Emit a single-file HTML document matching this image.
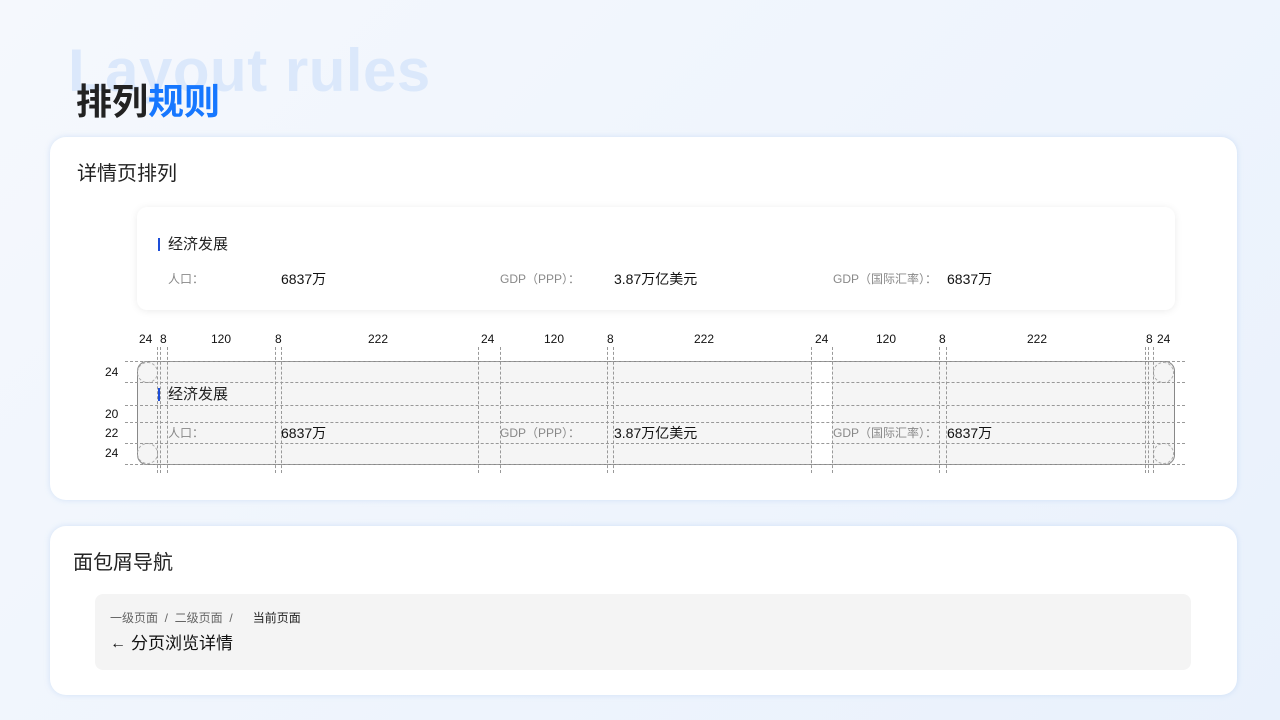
<!DOCTYPE html>
<html><head><meta charset="utf-8"><style>
*{margin:0;padding:0;box-sizing:border-box}
body{width:1280px;height:720px;overflow:hidden;position:relative;background:linear-gradient(135deg,#f5f8fd 0%,#eef4fd 60%,#e9f1fc 100%);font-family:"Liberation Sans","Noto Sans CJK SC",sans-serif;color:#222}
.a{position:absolute;white-space:nowrap}
.card{position:absolute;background:#fff;border-radius:16px;box-shadow:0 0 6px rgba(150,185,235,.35)}
.vl{position:absolute;top:347px;height:126px;width:0;border-left:1px dashed #999}
.hl{position:absolute;left:125px;width:1060px;height:0;border-top:1px dashed #999}
.n{position:absolute;font-size:12px;color:#111;top:332px}
.ln{position:absolute;font-size:12px;color:#111;left:105px}
.lab{font-size:12px;color:#888}
.val{font-size:14px;color:#111}
</style></head><body>
<div class="a" style="left:68px;top:36px;font-size:60px;font-weight:bold;color:#dbe8fb;line-height:70px;letter-spacing:0.5px">Layout rules</div>
<div class="a" style="left:76px;top:80px;font-size:36px;font-weight:bold;line-height:44px;color:#222">排列<span style="color:#1677ff">规则</span></div>

<div class="card" style="left:50px;top:137px;width:1187px;height:363px"></div>
<div class="a" style="left:77px;top:161px;font-size:20px;line-height:26px">详情页排列</div>
<div style="position:absolute;left:137px;top:207px;width:1038px;height:103px;background:#fff;border-radius:10px;box-shadow:0 1px 8px rgba(0,0,0,.08)"></div>
<div style="position:absolute;left:158px;top:238px;width:2px;height:13px;background:#1d4ed8"></div>
<div class="a" style="left:168px;top:235px;font-size:15px;line-height:20px">经济发展</div>
<div class="a lab" style="left:168px;top:271px;line-height:16px">人口：</div>
<div class="a val" style="left:281px;top:270px;line-height:18px">6837万</div>
<div class="a lab" style="left:500px;top:271px;line-height:16px">GDP（PPP）：</div>
<div class="a val" style="left:614px;top:270px;line-height:18px">3.87万亿美元</div>
<div class="a lab" style="left:833px;top:271px;line-height:16px">GDP（国际汇率）：</div>
<div class="a val" style="left:947px;top:270px;line-height:18px">6837万</div>

<div style="position:absolute;left:137px;top:361px;width:1038px;height:104px;background:#f5f5f5;border:1px solid #888;border-radius:10px"></div>
<div style="position:absolute;left:812px;top:362px;width:20px;height:102px;background:#fff"></div>
<div style="position:absolute;left:137px;top:362px;width:21px;height:21px;border:1px dashed #aaa;border-radius:50%"></div>
<div style="position:absolute;left:137px;top:443px;width:21px;height:21px;border:1px dashed #aaa;border-radius:50%"></div>
<div style="position:absolute;left:1153px;top:362px;width:21px;height:21px;border:1px dashed #aaa;border-radius:50%"></div>
<div style="position:absolute;left:1153px;top:443px;width:21px;height:21px;border:1px dashed #aaa;border-radius:50%"></div>
<div class="hl" style="top:361px"></div><div class="hl" style="top:382px"></div><div class="hl" style="top:405px"></div><div class="hl" style="top:422px"></div><div class="hl" style="top:443px"></div><div class="hl" style="top:464px"></div>
<div class="vl" style="left:157px"></div><div class="vl" style="left:160px"></div><div class="vl" style="left:167px"></div>
<div class="vl" style="left:275px"></div><div class="vl" style="left:281px"></div>
<div class="vl" style="left:478px"></div><div class="vl" style="left:500px"></div>
<div class="vl" style="left:607px"></div><div class="vl" style="left:613px"></div>
<div class="vl" style="left:811px"></div><div class="vl" style="left:832px"></div>
<div class="vl" style="left:939px"></div><div class="vl" style="left:946px"></div>
<div class="vl" style="left:1145px"></div><div class="vl" style="left:1148px"></div><div class="vl" style="left:1153px"></div>
<div class="n" style="left:139px">24</div><div class="n" style="left:160px">8</div><div class="n" style="left:211px">120</div><div class="n" style="left:275px">8</div><div class="n" style="left:368px">222</div>
<div class="n" style="left:481px">24</div><div class="n" style="left:544px">120</div><div class="n" style="left:607px">8</div><div class="n" style="left:694px">222</div>
<div class="n" style="left:815px">24</div><div class="n" style="left:876px">120</div><div class="n" style="left:939px">8</div><div class="n" style="left:1027px">222</div>
<div class="n" style="left:1146px">8</div><div class="n" style="left:1157px">24</div>
<div class="ln" style="top:365px">24</div><div class="ln" style="top:407px">20</div><div class="ln" style="top:426px">22</div><div class="ln" style="top:446px">24</div>
<div style="position:absolute;left:158px;top:388px;width:2px;height:13px;background:#1d4ed8"></div>
<div class="a" style="left:168px;top:385px;font-size:15px;line-height:20px">经济发展</div>
<div class="a lab" style="left:168px;top:425px;line-height:16px">人口：</div>
<div class="a val" style="left:281px;top:424px;line-height:18px">6837万</div>
<div class="a lab" style="left:500px;top:425px;line-height:16px">GDP（PPP）：</div>
<div class="a val" style="left:614px;top:424px;line-height:18px">3.87万亿美元</div>
<div class="a lab" style="left:833px;top:425px;line-height:16px">GDP（国际汇率）：</div>
<div class="a val" style="left:947px;top:424px;line-height:18px">6837万</div>

<div class="card" style="left:50px;top:526px;width:1187px;height:169px"></div>
<div class="a" style="left:73px;top:550px;font-size:20px;line-height:26px">面包屑导航</div>
<div style="position:absolute;left:95px;top:594px;width:1096px;height:76px;background:#f4f4f4;border-radius:8px"></div>
<div class="a" style="left:110px;top:610px;font-size:12px;line-height:16px;color:#666">一级页面 &nbsp;/ &nbsp;二级页面 &nbsp;/ &nbsp; &nbsp; &nbsp;<span style="color:#222">当前页面</span></div>
<div class="a" style="left:110px;top:633px;font-size:16px;line-height:22px;color:#111">←</div>
<div class="a" style="left:131px;top:633px;font-size:17px;line-height:22px;color:#111">分页浏览详情</div>
</body></html>
